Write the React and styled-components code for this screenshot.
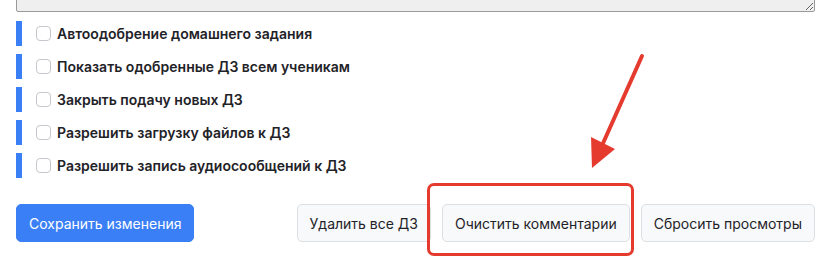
import React from "react";
import styled, { createGlobalStyle } from "styled-components";

const GlobalStyle = createGlobalStyle`
  html, body {
    margin: 0;
    padding: 0;
    background: #ffffff;
    overflow: hidden;
  }
  body {
    font-family: Inter, "Noto Sans", sans-serif;
    color: #212529;
  }
`;

const Page = styled.div`
  position: relative;
  width: 833px;
  height: 259px;
  padding: 0 18px 0 16px;
  box-sizing: border-box;
  overflow: hidden;
`;

const Notes = styled.textarea`
  display: block;
  width: 100%;
  height: 80px;
  margin: -68px 0 0 0;
  box-sizing: border-box;
  background: #efefef;
  border: 1px solid #9a9a9a;
  border-radius: 2px;
  resize: vertical;
`;

const Options = styled.div`
  display: flex;
  flex-direction: column;
  gap: 8px;
  margin-top: 9px;
`;

const Option = styled.label`
  display: flex;
  align-items: center;
  height: 25px;
  border-left: 6px solid #3b7ff6;
  padding-left: 14px;
  font-size: 14px;
  font-weight: 600;
  color: #1f2328;
`;

const Box = styled.span`
  width: 13px;
  height: 13px;
  border: 1px solid #c4c7cc;
  border-radius: 4px;
  margin-right: 6px;
  flex-shrink: 0;
`;

const Actions = styled.div`
  display: flex;
  align-items: center;
  margin-top: 26px;
`;

const Right = styled.div`
  display: flex;
  gap: 11px;
  margin-left: auto;
`;

const Button = styled.button`
  height: 38px;
  padding: 0 12px;
  font-family: Inter, "Noto Sans", sans-serif;
  font-size: 14px;
  border-radius: 5px;
  cursor: pointer;
  border: 1px solid ${p => (p.primary ? "#3b7ff6" : "#dcdfe3")};
  background: ${p => (p.primary ? "#3b7ff6" : "#f8f9fa")};
  color: ${p => (p.primary ? "#ffffff" : "#1f2328")};
`;

const Highlight = styled.div`
  position: absolute;
  left: 427px;
  top: 183px;
  width: 207px;
  height: 73px;
  box-sizing: border-box;
  border: 3.5px solid #e53b2f;
  border-radius: 7px;
  pointer-events: none;
`;

const Arrow = styled.svg`
  position: absolute;
  left: 0;
  top: 0;
  pointer-events: none;
`;

const options = [
  "Автоодобрение домашнего задания",
  "Показать одобренные ДЗ всем ученикам",
  "Закрыть подачу новых ДЗ",
  "Разрешить загрузку файлов к ДЗ",
  "Разрешить запись аудиосообщений к ДЗ"
];

export default function App() {
  return (
    <>
      <GlobalStyle />
      <Page>
        <Notes readOnly />
        <Options>
          {options.map(text => (
            <Option key={text}>
              <Box />
              {text}
            </Option>
          ))}
        </Options>
        <Actions>
          <Button primary>Сохранить изменения</Button>
          <Right>
            <Button>Удалить все ДЗ</Button>
            <Button>Очистить комментарии</Button>
            <Button>Сбросить просмотры</Button>
          </Right>
        </Actions>
        <Highlight />
        <Arrow width="833" height="259" viewBox="0 0 833 259">
          <line
            x1="642"
            y1="56"
            x2="600"
            y2="150"
            stroke="#e53b2f"
            strokeWidth="4"
            strokeLinecap="round"
          />
          <polygon points="591,137 615,149 592,168" fill="#e53b2f" />
        </Arrow>
      </Page>
    </>
  );
}
